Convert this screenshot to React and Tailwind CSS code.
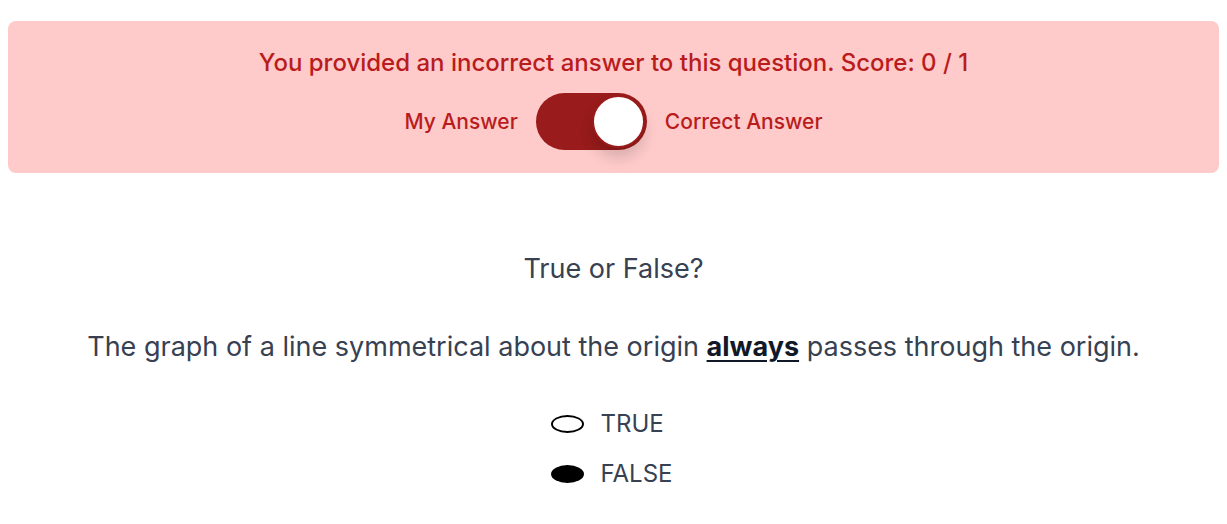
export default function App() {
  const font = { fontFamily: "Inter, 'Noto Sans', sans-serif" };
  return (
    <div className="w-[1227px] h-[524px] bg-white" style={font}>
      <div className="px-2 pt-[21px]">
        <div className="h-[152px] rounded-lg bg-[#fecaca] flex flex-col items-center pt-[28px]">
          <p className="text-[24px] leading-[28px] font-medium text-[#b91c1c]">
            You provided an incorrect answer to this question. Score: 0 / 1
          </p>
          <div className="flex items-center mt-[16px]">
            <span className="text-[21px] font-medium text-[#b91c1c] mr-[18px]">My Answer</span>
            <div className="relative w-[111px] h-[57px] rounded-full bg-[#991b1b]">
              <div className="absolute right-[2px] top-[2px] w-[53px] h-[53px] rounded-full bg-white border-2 border-[#991b1b] shadow-[0_10px_14px_rgba(0,0,0,0.14)]" />
            </div>
            <span className="text-[21px] font-medium text-[#b91c1c] ml-[18px]">Correct Answer</span>
          </div>
        </div>
      </div>
      <div className="flex flex-col items-center text-[#374151]">
        <p className="mt-[80px] text-[27px] leading-[32px]">True or False?</p>
        <p className="mt-[44px] text-[27px] leading-[36px]">
          The graph of a line symmetrical about the origin{" "}
          <span className="font-bold text-[#111827] underline underline-offset-4 decoration-2">always</span>{" "}
          passes through the origin.
        </p>
        <div className="mt-[44px] flex flex-col gap-[20px] mr-[4px]">
          <label className="flex items-center">
            <span className="w-[33px] h-[18px] rounded-[50%] border-2 border-black" />
            <span className="ml-[17px] text-[24px] leading-[30px]">TRUE</span>
          </label>
          <label className="flex items-center">
            <span className="w-[33px] h-[18px] rounded-[50%] bg-black" />
            <span className="ml-[17px] text-[24px] leading-[30px]">FALSE</span>
          </label>
        </div>
      </div>
    </div>
  );
}
